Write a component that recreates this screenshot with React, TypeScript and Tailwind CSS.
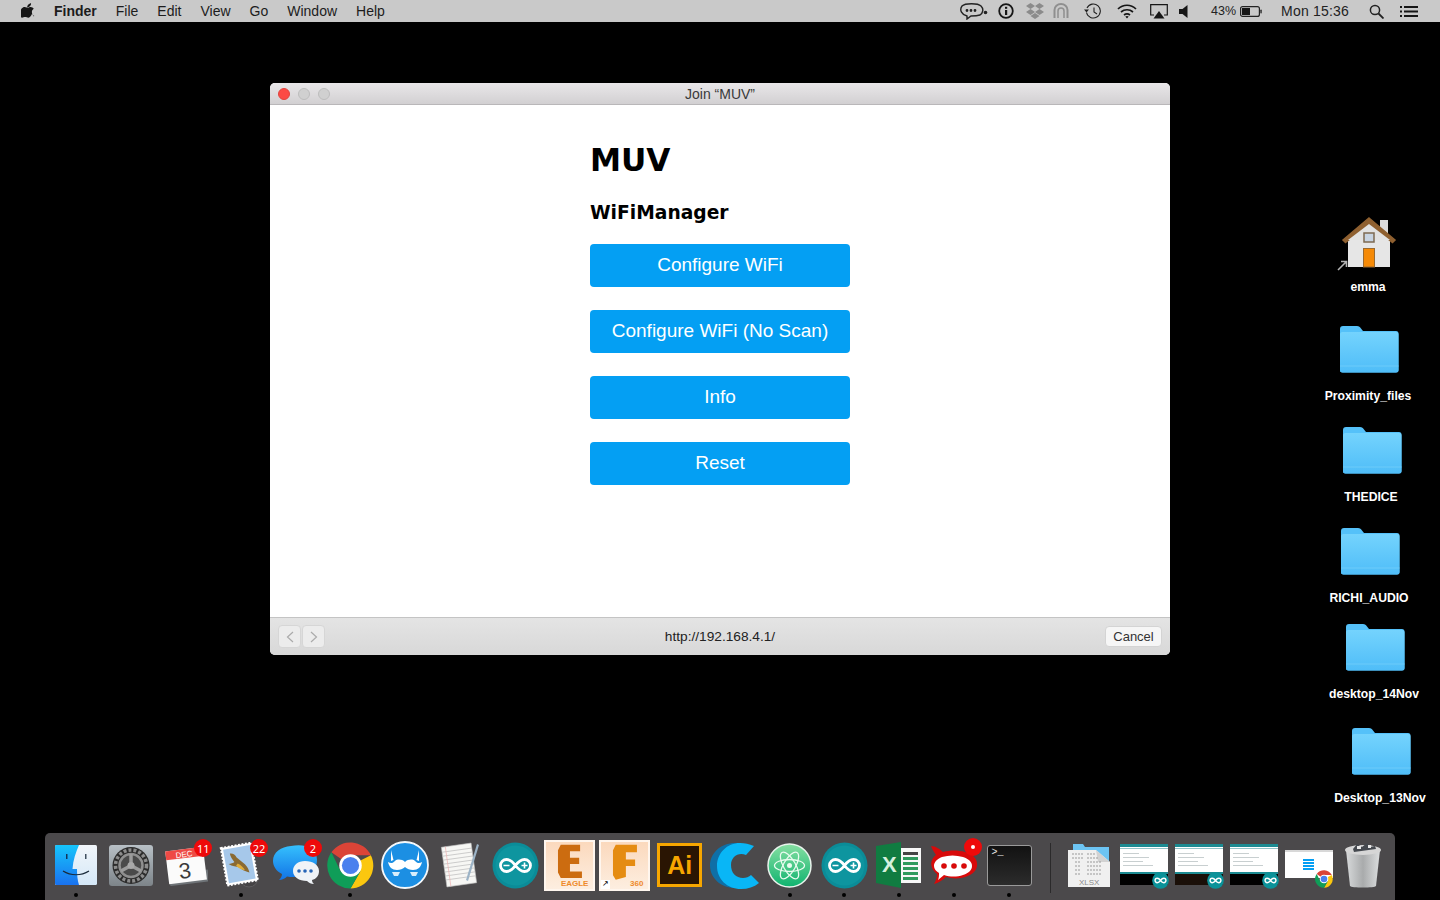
const sans = "font-['Liberation_Sans','Arial',sans-serif]";

const menus = ['File', 'Edit', 'View', 'Go', 'Window', 'Help'];

function MenuBar() {
  return (
    <div className={`flex h-[22px] items-center bg-[#c9c9c9] text-[14px] text-[#1c1c1c] ${sans}`}>
      <svg className="ml-[21px] h-[16px] w-[15px]" viewBox="0 0 170 200" fill="#161616">
        <path d="M150 155c-4 9-8 17-13 24-7 10-13 17-17 20-7 6-14 9-22 9-6 0-13-2-21-5-8-3-15-5-22-5-7 0-15 2-23 5-8 3-15 5-20 5-8 0-15-3-23-10C-15 170-22 120 6 85c11-14 25-21 41-21 9 0 20 3 31 7 7 2 11 3 13 3 2 0 7-1 15-4 8-3 16-4 24-4 20 2 34 9 44 23-18 11-26 26-26 45 0 15 6 27 16 37 5 4 10 8 16 10-1 4-3 8-5 12z" transform="translate(-6 -10) scale(.9 .93)" />
        <path d="M117 5c0 12-4 23-13 33-10 12-23 19-36 18-1-11 4-24 12-34 5-5 11-10 18-13 7-4 14-6 19-6z" />
      </svg>
      <span className="ml-[18px] font-bold">Finder</span>
      {menus.map((m) => (
        <span key={m} className="ml-[19px]">{m}</span>
      ))}
      <div className="flex-1" />
      <MenuExtras />
    </div>
  );
}

function MenuExtras() {
  return (
    <div className="flex items-center pr-[22px] text-[#222]">
      <svg className="h-[18px] w-[28px]" viewBox="0 0 28 18" fill="none" stroke="#222" strokeWidth="1.4">
        <path d="M2 4c3-3 16-3 19 0 3 3 2 7-1 9-3 1-7 1-9 1l-4 3 0-3c-5-1-8-6-5-10z" />
        <circle cx="7" cy="8.5" r=".7" fill="#222" /><circle cx="11" cy="8.5" r=".7" fill="#222" /><circle cx="15" cy="8.5" r=".7" fill="#222" />
        <circle cx="25.5" cy="10.5" r="1.8" fill="#222" stroke="none" />
      </svg>
      <svg className="ml-[10px] h-[16px] w-[16px]" viewBox="0 0 16 16" fill="none">
        <circle cx="8" cy="8" r="6.8" stroke="#161616" strokeWidth="1.8" />
        <rect x="7" y="3.8" width="2.2" height="2" fill="#161616" /><rect x="7" y="7" width="2.2" height="5" fill="#161616" />
      </svg>
      <svg className="ml-[12px] h-[16px] w-[18px]" viewBox="0 0 18 16" fill="#8b8b8b">
        <path d="M4.5 0 9 3 4.500 6 0 3zM13.500 0 18 3 13.500 6 9 3zM4.500 6 9 9 4.500 12 0 9zM13.500 6 18 9 13.500 12 9 9zM4.500 13l4.500-3 4.500 3-4.500 3z" />
      </svg>
      <svg className="ml-[9px] h-[16px] w-[16px]" viewBox="0 0 16 16" fill="none" stroke="#8f8f8f" strokeWidth="2">
        <path d="M1.500 15V7a6.500 6 0 0 1 13 0v8" /><path d="M5 15V8a3 3 0 0 1 6 0v7" strokeWidth="1.500" />
      </svg>
      <svg className="ml-[14px] h-[17px] w-[19px]" viewBox="0 0 19 17" fill="none" stroke="#222" strokeWidth="1.100">
        <path d="M4 5a7 7 0 1 1-.5 4.500" /><path d="M1 6.500h5L3.500 9.500z" fill="#222" stroke="none" /><path d="M11 4.500v4.500l3 2" />
      </svg>
      <svg className="ml-[15px] h-[15px] w-[20px]" viewBox="0 0 20 15" fill="none" stroke="#161616" strokeWidth="1.700">
        <path d="M1 5c5-5 13-5 18 0" /><path d="M4 8c3.500-3 8.500-3 12 0" /><path d="M7 11c2-1.500 4-1.500 6 0" />
        <path d="m8.300 12.500 1.700 2 1.700-2c-1-.7-2.400-.7-3.400 0z" fill="#161616" stroke="none" />
      </svg>
      <svg className="ml-[13px] h-[15px] w-[18px]" viewBox="0 0 18 15" fill="none">
        <path d="M4 11H.7V.7h16.600V11H14" stroke="#161616" strokeWidth="1.200" />
        <path d="m9 7 5.500 7.500h-11z" fill="#161616" />
      </svg>
      <svg className="ml-[11px] h-[13px] w-[9px]" viewBox="0 0 9 13" fill="#161616"><path d="M0 4h3.500L8.500 0v13L3.500 9H0z" /></svg>
      <span className="ml-[23px] text-[12.5px]">43%</span>
      <svg className="ml-[4px] h-[11px] w-[22px]" viewBox="0 0 22 11" fill="none">
        <rect x=".6" y=".6" width="18.800" height="9.800" rx="2" stroke="#222" strokeWidth="1.200" />
        <rect x="2" y="2" width="8" height="7" fill="#161616" />
        <rect x="20.300" y="3.500" width="1.500" height="4" rx=".7" fill="#333" />
      </svg>
      <span className="ml-[19px] tracking-[0.2px]">Mon 15:36</span>
      <svg className="ml-[20px] h-[15px] w-[15px]" viewBox="0 0 15 15" fill="none" stroke="#222" strokeWidth="1.500">
        <circle cx="6" cy="6" r="4.600" /><path d="m9.500 9.500 5 5" strokeWidth="1.800" />
      </svg>
      <svg className="ml-[16px] h-[11px] w-[18px]" viewBox="0 0 18 11" fill="#161616">
        <rect x="0" y="0" width="2" height="2" /><rect x="4" y="0" width="14" height="2" />
        <rect x="0" y="4.500" width="2" height="2" /><rect x="4" y="4.500" width="14" height="2" />
        <rect x="0" y="9" width="2" height="2" /><rect x="4" y="9" width="14" height="2" />
      </svg>
    </div>
  );
}

const actions = ['Configure WiFi', 'Configure WiFi (No Scan)', 'Info', 'Reset'];

function JoinWindow() {
  return (
    <div className={`absolute left-[270px] top-[83px] flex h-[572px] w-[900px] flex-col overflow-hidden rounded-[5px] bg-white ${sans}`}>
      <div className="relative flex h-[22px] items-center justify-center border-b border-[#b9b7b9] bg-gradient-to-b from-[#e9e7e9] to-[#d2d0d2] pt-[1px] text-[14px] text-[#3a3a3a]">
        <div className="absolute left-[8px] top-[5px] flex gap-[8px]">
          <span className="h-[12px] w-[12px] rounded-full border border-[#e0443e] bg-[#fc4a44]" />
          <span className="h-[12px] w-[12px] rounded-full border border-[#bcbcbc] bg-[#d0d0d0]" />
          <span className="h-[12px] w-[12px] rounded-full border border-[#bcbcbc] bg-[#d0d0d0]" />
        </div>
        Join “MUV”
      </div>
      <div className="flex flex-1 flex-col items-center">
        <div className="flex w-[260px] flex-col">
          <h1 className="mt-[36px] h-[38px] text-[31.2px] font-bold leading-[38px] text-black font-['DejaVu_Sans',sans-serif]">MUV</h1>
          <h2 className="mt-[21px] h-[25px] text-[18.7px] font-bold leading-[25px] text-black font-['DejaVu_Sans',sans-serif]">WiFiManager</h2>
          <div className="mt-[19px] flex flex-col gap-[23px]">
            {actions.map((a) => (
              <button key={a} className="flex h-[43px] items-center justify-center rounded-[4px] bg-[#049ff3] text-[19px] text-white">
                {a}
              </button>
            ))}
          </div>
        </div>
      </div>
      <div className="relative flex h-[38px] items-center justify-center border-t border-[#c4c4c4] bg-gradient-to-b from-[#e4e4e4] to-[#d8d8d8] pt-[2px] text-[13.7px] text-[#222]">
        <div className="absolute left-[8px] top-[7px] flex gap-[1px]">
          <span className="flex h-[23px] w-[23px] items-center justify-center rounded-[4px] border border-[#d6d6d6] bg-[#ececec]">
            <svg className="h-[12px] w-[8px]" viewBox="0 0 8 12" fill="none" stroke="#ababab" strokeWidth="1.200"><path d="M7 1 1.500 6 7 11" /></svg>
          </span>
          <span className="flex h-[23px] w-[23px] items-center justify-center rounded-[4px] border border-[#d6d6d6] bg-[#ececec]">
            <svg className="h-[12px] w-[8px]" viewBox="0 0 8 12" fill="none" stroke="#ababab" strokeWidth="1.200"><path d="M1 1l5.500 5L1 11" /></svg>
          </span>
        </div>
        http://192.168.4.1/
        <span className="absolute right-[8px] top-[8px] flex h-[21px] w-[57px] items-center justify-center rounded-[4px] border border-[#d4d4d4] bg-[#f6f6f6] text-[13px] text-[#333]">
          Cancel
        </span>
      </div>
    </div>
  );
}

function Folder() {
  return (
    <svg className="h-[48px] w-[60px]" viewBox="0 0 60 48">
      <defs>
        <linearGradient id="folderFill" x1="0" y1="0" x2="0" y2="1">
          <stop offset="0" stopColor="#74d3fd" />
          <stop offset="1" stopColor="#4fbdf8" />
        </linearGradient>
      </defs>
      <path d="M1 4a3 3 0 0 1 3-3h14c2 0 3 1 4 2.500L24 6h33a2.500 2.500 0 0 1 2.500 2.500V45a2.500 2.500 0 0 1-2.500 2.500H3.500A2.500 2.500 0 0 1 1 45z" fill="#55c1f9" />
      <path d="M1 9.500a2.500 2.500 0 0 1 2.500-2.500H57a2.500 2.500 0 0 1 2.500 2.500V45a2.500 2.500 0 0 1-2.500 2.500H3.500A2.500 2.500 0 0 1 1 45z" fill="url(#folderFill)" />
      <path d="M1 41h58.500" stroke="#6ccbfa" strokeWidth="1" />
    </svg>
  );
}

function HomeIcon() {
  return (
    <svg className="h-[56px] w-[62px]" viewBox="0 0 62 56">
      <rect x="43" y="4" width="8" height="16" fill="#dcdcdc" />
      <rect x="11" y="20" width="42" height="31" fill="#e6e6e6" />
      <path d="M32 2 58 24l-2.500 2.500L32 8 8.500 26.500 6 24z" fill="#8f6030" stroke="#8f6030" strokeWidth="1.500" />
      <path d="M32 8 53 24H11z" fill="#e2e2e2" />
      <rect x="27" y="17" width="10" height="9" fill="#c8d4e2" stroke="#7d6a52" strokeWidth="1.500" />
      <rect x="26.500" y="32.500" width="11" height="18.500" fill="#f58a07" stroke="#9a6a30" />
    </svg>
  );
}

const desktopItems = [
  { label: 'Proximity_files', left: 'left-[1339px]', top: 'top-[325px]', labelTop: 'top-[387px]', labelLeft: 'left-[1317px]' },
  { label: 'THEDICE', left: 'left-[1342px]', top: 'top-[426px]', labelTop: 'top-[488px]', labelLeft: 'left-[1320px]' },
  { label: 'RICHI_AUDIO', left: 'left-[1340px]', top: 'top-[527px]', labelTop: 'top-[589px]', labelLeft: 'left-[1318px]' },
  { label: 'desktop_14Nov', left: 'left-[1345px]', top: 'top-[623px]', labelTop: 'top-[685px]', labelLeft: 'left-[1323px]' },
  { label: 'Desktop_13Nov', left: 'left-[1351px]', top: 'top-[727px]', labelTop: 'top-[789px]', labelLeft: 'left-[1329px]' },
];

function DesktopIcons() {
  return (
    <div className={`text-[12.2px] font-bold text-white ${sans}`}>
      <div className="absolute left-[1337px] top-[216px]"><HomeIcon /></div>
      <svg className="absolute left-[1337px] top-[260px] h-[11px] w-[11px]" viewBox="0 0 11 11" fill="none" stroke="#b4b4b4" strokeWidth="1.600">
        <path d="M1 10 9 2M4 1.500h5.500V7" />
      </svg>
      <div className="absolute left-[1318px] top-[278px] w-[100px] text-center">emma</div>
      {desktopItems.map((d) => (
        <div key={d.label}>
          <div className={`absolute ${d.left} ${d.top}`}><Folder /></div>
          <div className={`absolute ${d.labelLeft} ${d.labelTop} w-[102px] text-center`}>{d.label}</div>
        </div>
      ))}
    </div>
  );
}

function Badge({ text, className }: { text: string; className: string }) {
  return (
    <span className={`absolute flex h-[18px] w-[18px] items-center justify-center rounded-full bg-[#ee0a0a] text-[11px] leading-none text-white ${className}`}>
      {text}
    </span>
  );
}

function Finder() {
  return (
    <svg className="h-[40px] w-[42px]" viewBox="0 0 42 40">
      <defs>
        <linearGradient id="finderL" x1="0" y1="0" x2="0" y2="1"><stop offset="0" stopColor="#16c5fb" /><stop offset="1" stopColor="#1a72ef" /></linearGradient>
        <linearGradient id="finderR" x1="0" y1="0" x2="0" y2="1"><stop offset="0" stopColor="#f1f6fa" /><stop offset="1" stopColor="#d5e8f8" /></linearGradient>
      </defs>
      <rect width="42" height="40" rx="1.500" fill="url(#finderR)" />
      <path d="M1.500 0H24c-3 7-6 15-6.500 24H22c0 6 .5 11 2 16H1.500A1.500 1.500 0 0 1 0 38.500v-37A1.500 1.500 0 0 1 1.500 0z" fill="url(#finderL)" />
      <path d="M8 26c8 5 18 5 26 0" fill="none" stroke="#1a2a3a" strokeWidth="1.200" />
      <rect x="11" y="9" width="1.500" height="5" fill="#12365a" /><rect x="30" y="9" width="1.500" height="5" fill="#40505f" />
    </svg>
  );
}

function Prefs() {
  return (
    <svg className="h-[41px] w-[44px]" viewBox="0 0 44 41">
      <defs><linearGradient id="prefsBg" x1="0" y1="0" x2="0" y2="1"><stop offset="0" stopColor="#b8c0c6" /><stop offset="1" stopColor="#7d8489" /></linearGradient></defs>
      <rect width="44" height="41" rx="3" fill="url(#prefsBg)" />
      <circle cx="22" cy="20.500" r="18.500" fill="#2c2c2c" />
      <circle cx="22" cy="20.500" r="15.500" fill="none" stroke="#8c8c8c" strokeWidth="3.500" strokeDasharray="3 2" />
      <circle cx="22" cy="20.500" r="11.500" fill="#4a4a4a" stroke="#8f8f8f" strokeWidth="2.500" />
      <path d="M22 20.500V9M22 20.500 12 26M22 20.500 32 26" stroke="#9b9b9b" strokeWidth="3.500" />
      <circle cx="22" cy="20.500" r="3.500" fill="#a8a8a8" />
    </svg>
  );
}

function Calendar() {
  return (
    <svg className="h-[42px] w-[44px]" viewBox="0 0 44 42">
      <g transform="rotate(-7 22 21)">
        <rect x="4" y="28" width="39" height="12" fill="#6f7478" />
        <rect x="3" y="5" width="38" height="33" fill="#fbfbfb" />
        <rect x="3" y="5" width="38" height="9" fill="#ee4a45" />
        <text x="13" y="13" fontSize="8" fill="#fff" fontFamily="Liberation Sans">DEC</text>
        <text x="14" y="34" fontSize="22" fill="#3a3a3a" fontFamily="Liberation Sans">3</text>
      </g>
    </svg>
  );
}

function Mail() {
  return (
    <svg className="h-[46px] w-[44px]" viewBox="0 0 44 46">
      <circle cx="30" cy="36" r="9" fill="#454345" stroke="#5e5c5e" />
      <g transform="rotate(-10 21 23)">
        <rect x="5" y="3" width="31" height="38" fill="#fff" stroke="#fff" strokeWidth="2" strokeDasharray="2 1.500" />
        <rect x="7" y="5" width="27" height="34" fill="#a6c8ea" />
        <path d="M13 10c3 0 5 2 6 5l7 8c2 3 3 6 3 9-4-2-7-4-9-7-3-1-7-2-10-5 2 0 5 0 6-1-2-3-3-6-3-9z" fill="#8a6a32" />
        <path d="M19 21c3 2 5 5 6 8-3-1-6-3-8-6z" fill="#e0ad3a" />
      </g>
    </svg>
  );
}

function Messages() {
  return (
    <svg className="h-[42px] w-[46px]" viewBox="0 0 46 42">
      <defs><linearGradient id="msgBlue" x1="0" y1="0" x2="0" y2="1"><stop offset="0" stopColor="#35c0fd" /><stop offset="1" stopColor="#1273e6" /></linearGradient></defs>
      <path d="M18 2C30 0 44 2 44 16c0 11-10 17-24 17-2 0-4 0-6-.5-2 2-5 3.500-8 3.500 2-2 3-4 3-6C3 27 0 22 0 17 0 8 8 3 18 2z" fill="url(#msgBlue)" />
      <path d="M32 17c8 0 14 4 14 10 0 5-3 8-7 9 0 2 1 3 2 4-3 0-5-1-7-3-8 0-14-4-14-10s5-10 12-10z" fill="#eff3f7" />
      <circle cx="26" cy="27" r="1.800" fill="#2765b7" /><circle cx="32" cy="27" r="1.800" fill="#2765b7" /><circle cx="38" cy="27" r="1.800" fill="#2765b7" />
    </svg>
  );
}

function Chrome({ size = 'h-[47px] w-[47px]' }: { size?: string }) {
  return (
    <svg className={size} viewBox="0 0 48 48">
      <path d="M24 24 4.500 10.500A23.500 23.500 0 0 1 44.800 13.500H24z" fill="#db4437" />
      <path d="M24 24 44.800 13.500A23.500 23.500 0 0 1 24 47.500L34 30z" fill="#fbc70f" />
      <path d="M24 24 34 30 24 47.500A23.500 23.500 0 0 1 4.500 10.500L14 30z" fill="#0f9d58" />
      <circle cx="24" cy="24" r="11.500" fill="#fff" />
      <circle cx="24" cy="24" r="8.800" fill="#4a80ee" />
    </svg>
  );
}

function Moustache() {
  return (
    <svg className="h-[48px] w-[48px]" viewBox="0 0 48 48">
      <circle cx="24" cy="24" r="23" fill="#1c8fe3" stroke="#f4f8fb" strokeWidth="1.800" />
      <path d="M24 21c3-3 8-3 10-1 2 2 4 3 7 1-1 5-4 8-9 8-3 0-6-1-8-3-2 2-5 3-8 3-5 0-8-3-9-8 3 2 5 1 7-1 2-2 7-2 10 1z" fill="#fff" />
      <path d="M10 20V9l2.500 10zM38 20V9l-2.500 10z" fill="#fff" />
      <path d="M11 31h8l-2 4h-4zM29 31h8l-2 4h-4z" fill="#d9eefb" />
    </svg>
  );
}

function Notepad() {
  return (
    <svg className="h-[46px] w-[42px]" viewBox="0 0 42 46">
      <g transform="rotate(-8 20 23)">
        <rect x="5" y="3" width="30" height="40" fill="#f7f7f4" stroke="#bdbdbd" strokeWidth=".6" />
        <path d="M5 8h30M5 12h30M5 16h30M5 20h30M5 24h30M5 28h30M5 32h30M5 36h30" stroke="#bdbdbd" strokeWidth=".7" />
        <path d="M9 3v40" stroke="#eeb4b4" strokeWidth=".7" />
      </g>
      <path d="M38 2 40 3 29 39l-2-1z" fill="#9cb3c6" />
    </svg>
  );
}

function Arduino() {
  return (
    <svg className="h-[47px] w-[47px]" viewBox="0 0 47 47">
      <circle cx="23.500" cy="23.500" r="23" fill="#0b8c98" />
      <circle cx="23.500" cy="23.500" r="20" fill="#0e959f" />
      <path d="M23.500 23.500c-3-4-5.500-6-9-6a6 6 0 0 0 0 12c3.500 0 6-2 9-6 3-4 5.500-6 9-6a6 6 0 0 1 0 12c-3.500 0-6-2-9-6z" fill="none" stroke="#fff" strokeWidth="2.800" />
      <path d="M11.500 23.500h6M29.500 23.500h6M32.500 20.500v6" stroke="#fff" strokeWidth="1.600" />
    </svg>
  );
}

function Autodesk({ letter, label, shortcut }: { letter: 'E' | 'F'; label: string; shortcut?: boolean }) {
  const mark = letter === 'E'
    ? 'M15 4h21v7H25v7h10v7H25v8h13v7H15l-3-6V10z'
    : 'M15 4h23v8H26v8h10v7H26v12l-11 3-3-5V10z';
  const fill = letter === 'E' ? '#cc6c10' : '#e58c12';
  return (
    <div className={`relative flex h-[51px] w-[51px] flex-col border-2 border-[#fff6ee] bg-gradient-to-b from-[#fbd9bd] to-[#fdeee0] ${sans}`}>
      <svg className="h-[47px] w-[47px]" viewBox="0 0 51 51">
        <path d={mark} fill={fill} transform="translate(1 -1)" />
      </svg>
      <span className="absolute bottom-[1px] right-[5px] text-[8px] font-bold leading-none text-[#ee8a2b]">{label}</span>
      {shortcut && (
        <span className="absolute bottom-0 left-0 flex h-[9px] w-[9px] items-center justify-center bg-white text-[8px] leading-none text-black">↗</span>
      )}
    </div>
  );
}

function Illustrator() {
  return (
    <div className={`flex h-[44px] w-[45px] items-center justify-center border-[3px] border-[#f7a600] bg-[#2a1503] text-[25px] font-bold leading-none text-[#f7a600] ${sans}`}>
      Ai
    </div>
  );
}

function Crescent() {
  return (
    <svg className="h-[47px] w-[49px]" viewBox="0 0 49 47">
      <path d="M25 1C11 1 0 11 0 23.500S11 46 25 46c4 0 7-1 9-3-9-1-15-9-15-19 0-10 7-19 17-21-3-1-7-2-11-2z" fill="#0f6fa6" />
      <path d="M30 1c5 0 9 1 14 3l-8 9c-8-3-15 2-15 10s5 13 12 13c3 0 6-1 8-3l8 8c-5 4-11 6-18 6C17 47 7 37 7 24S17 1 30 1z" fill="#09b6f6" />
    </svg>
  );
}

function Atom() {
  return (
    <svg className="h-[45px] w-[45px]" viewBox="0 0 45 45">
      <defs><linearGradient id="atomBg" x1="0" y1="0" x2="0" y2="1"><stop offset="0" stopColor="#86dfa2" /><stop offset="1" stopColor="#0fb36f" /></linearGradient></defs>
      <circle cx="22.500" cy="22.500" r="21.500" fill="url(#atomBg)" stroke="#e8f3ec" strokeWidth="1.500" />
      <g fill="none" stroke="#e9fbef" strokeWidth="1.300">
        <ellipse cx="22.500" cy="22.500" rx="15" ry="6" />
        <ellipse cx="22.500" cy="22.500" rx="15" ry="6" transform="rotate(60 22.500 22.500)" />
        <ellipse cx="22.500" cy="22.500" rx="15" ry="6" transform="rotate(120 22.500 22.500)" />
      </g>
      <circle cx="22.500" cy="22.500" r="2.500" fill="#e9fbef" />
    </svg>
  );
}

function Excel() {
  return (
    <svg className="h-[46px] w-[46px]" viewBox="0 0 46 46">
      <rect x="24" y="6" width="21" height="35" fill="#f7f7f7" />
      <path d="M27 10h15v3H27zM27 15h15v3H27zM27 20h15v3H27zM27 25h15v3H27zM27 30h15v3H27zM27 35h15v3H27z" fill="#2f9a5d" />
      <path d="M27 10h15v3H27z" fill="#444" />
      <path d="M0 4 25 0v46L0 41z" fill="#107c41" />
      <text x="6" y="30" fontSize="22" fontWeight="bold" fill="#d5f0dd" fontFamily="Liberation Sans">X</text>
    </svg>
  );
}

function Rocket() {
  return (
    <svg className="h-[44px] w-[50px]" viewBox="0 0 50 44">
      <path d="M2 3c4 0 9 3 12 6 7-2 15-2 22 0 4 1 8 3 10 6 3 4 3 10-1 14-6 6-18 8-28 5-3 3-8 6-12 7 2-3 3-7 3-10C3 27 1 22 3 17c1-2 2-4 4-5C5 9 3 6 2 3z" fill="#d80a0a" />
      <path d="M13 14c7-2 14-2 21 0 6 2 9 5 9 9s-3 7-9 9c-6 2-13 2-19 0l-6 5c1-2 1-5 1-7-3-2-5-4-5-7 0-4 3-7 8-9z" fill="#fff" />
      <circle cx="15" cy="23" r="2.800" fill="#d80a0a" /><circle cx="25" cy="23" r="2.800" fill="#d80a0a" /><circle cx="35" cy="23" r="2.800" fill="#d80a0a" />
    </svg>
  );
}

function Terminal() {
  return (
    <div className="h-[41px] w-[45px] rounded-[3px] border border-[#9a9a9a] bg-gradient-to-b from-[#121212] to-[#2c2c2c] px-[4px] py-[1px] font-['Liberation_Mono',monospace] text-[10px] leading-[12px] text-[#e6e6e6]">
      &gt;_
    </div>
  );
}

function XlsxStack() {
  return (
    <svg className="h-[46px] w-[44px]" viewBox="0 0 44 46">
      <path d="M6 2h10l2 3h24v38H6z" fill="#6cc4f3" />
      <path d="M1 8h28l14 12v25H1z" fill="#f0f0f0" />
      <path d="M29 8l14 12H31z" fill="#d2d2d2" />
      <path d="M5 12h12M20 12h8M5 16h12M20 16h12M8 20h5M20 20h14M8 24h5M20 24h14M8 28h5M20 28h14M8 32h5M20 32h14" stroke="#9a9a9a" strokeWidth="1" strokeDasharray="2 1" />
      <text x="12" y="43" fontSize="8" fill="#8a8a8a" fontFamily="Liberation Sans">XLSX</text>
    </svg>
  );
}

function SketchThumb({ lower }: { lower: string }) {
  return (
    <div className="relative h-[42px] w-[48px]">
      <div className="flex h-[41px] w-[48px] flex-col bg-white">
        <div className="h-[3px] bg-[#1c8b92]" />
        <div className="mt-[1px] h-[1px] bg-[#8fc3c8]" />
        <div className="flex-1 px-[3px] pt-[4px]">
          <div className="h-[1px] w-[16px] bg-[#c8cfd0]" />
          <div className="mt-[3px] h-[1px] w-[26px] bg-[#c8cfd0]" />
          <div className="mt-[3px] h-[1px] w-[20px] bg-[#c8cfd0]" />
          <div className="mt-[3px] h-[1px] w-[30px] bg-[#c8cfd0]" />
        </div>
        <div className="h-[2px] bg-[#1c8b92]" />
        <div className={`h-[11px] ${lower}`} />
      </div>
      <svg className="absolute bottom-[-3px] right-[-1px] h-[17px] w-[17px]" viewBox="0 0 47 47">
        <circle cx="23.500" cy="23.500" r="23" fill="#0b9299" />
        <path d="M23.500 23.500c-3-4-5.500-6-9-6a6 6 0 0 0 0 12c3.500 0 6-2 9-6 3-4 5.500-6 9-6a6 6 0 0 1 0 12c-3.500 0-6-2-9-6z" fill="none" stroke="#fff" strokeWidth="4" />
      </svg>
    </div>
  );
}

function ChromeThumb() {
  return (
    <div className="relative mt-[-2px] h-[28px] w-[48px] bg-white">
      <div className="h-[2px] bg-[#d8d8d8]" />
      <div className="mx-auto mt-[7px] flex w-[11px] flex-col gap-[1px]">
        <div className="h-[2px] bg-[#049ff3]" /><div className="h-[2px] bg-[#049ff3]" /><div className="h-[2px] bg-[#049ff3]" /><div className="h-[2px] bg-[#049ff3]" />
      </div>
      <div className="absolute bottom-[-10px] right-[0px]"><Chrome size="h-[18px] w-[18px]" /></div>
    </div>
  );
}

function Trash() {
  return (
    <svg className="h-[48px] w-[38px]" viewBox="0 0 38 48">
      <defs><linearGradient id="trashBg" x1="0" y1="0" x2="1" y2="0"><stop offset="0" stopColor="#d8dadb" /><stop offset=".5" stopColor="#a9abac" /><stop offset="1" stopColor="#dcdedf" /></linearGradient></defs>
      <path d="M2 9h34l-4 36c-1 2-25 2-26 0z" fill="url(#trashBg)" />
      <ellipse cx="19" cy="9" rx="18" ry="5" fill="#d6d6d6" />
      <path d="M9 8l4-5 5 3 5-4 3 4 5-1 1 3-22 3z" fill="#45494f" />
      <path d="M13 5h4v3h-4zM24 4h3v3h-3z" fill="#e8e8e8" />
    </svg>
  );
}

const dockApps = [
  { id: 'finder', icon: <Finder />, running: true },
  { id: 'prefs', icon: <Prefs /> },
  { id: 'calendar', icon: <Calendar />, badge: <Badge text="11" className="right-[1px] top-[6px]" /> },
  { id: 'mail', icon: <Mail />, running: true, badge: <Badge text="22" className="right-[0px] top-[6px]" /> },
  { id: 'messages', icon: <Messages />, badge: <Badge text="2" className="right-[1px] top-[6px]" /> },
  { id: 'chrome', icon: <Chrome />, running: true },
  { id: 'moustache', icon: <Moustache /> },
  { id: 'notes', icon: <Notepad /> },
  { id: 'arduino', icon: <Arduino /> },
  { id: 'eagle', icon: <Autodesk letter="E" label="EAGLE" /> },
  { id: 'fusion', icon: <Autodesk letter="F" label="360" shortcut /> },
  { id: 'ai', icon: <Illustrator /> },
  { id: 'crescent', icon: <Crescent /> },
  { id: 'atom', icon: <Atom />, running: true },
  { id: 'arduino2', icon: <Arduino />, running: true },
  { id: 'excel', icon: <Excel />, running: true },
  { id: 'rocket', icon: <Rocket />, running: true, badge: <span className="absolute right-[0px] top-[5px] flex h-[18px] w-[18px] items-center justify-center rounded-full bg-[#ee0a0a]"><span className="h-[4px] w-[4px] rounded-full bg-white" /></span> },
  { id: 'terminal', icon: <Terminal />, running: true },
];

const dockDocs = [
  { id: 'xlsx', icon: <XlsxStack /> },
  { id: 'sketch1', icon: <SketchThumb lower="bg-black" /> },
  { id: 'sketch2', icon: <SketchThumb lower="bg-[#1a0f08]" /> },
  { id: 'sketch3', icon: <SketchThumb lower="bg-black" /> },
  { id: 'chromeWin', icon: <ChromeThumb /> },
  { id: 'trash', icon: <Trash /> },
];

function Dock() {
  return (
    <div className="absolute bottom-0 left-[45px] flex h-[67px] w-[1350px] items-start rounded-t-[5px] bg-[#4b494b] pl-[3.500px]">
      {dockApps.map((app) => (
        <div key={app.id} className="relative flex h-[67px] w-[54.900px] shrink-0 items-center justify-center pb-[3px]">
          {app.icon}
          {app.badge}
          {app.running && <span className="absolute bottom-[3px] left-1/2 h-[4px] w-[4px] -translate-x-1/2 rounded-full bg-black" />}
        </div>
      ))}
      <div className="ml-[13.500px] mr-[11px] mt-[10px] h-[50px] w-[1px] bg-[#2b2a2b]" />
      {dockDocs.map((doc) => (
        <div key={doc.id} className="relative flex h-[67px] w-[54.800px] shrink-0 items-center justify-center pb-[3px]">
          {doc.icon}
        </div>
      ))}
    </div>
  );
}

export default function App() {
  return (
    <div className="relative h-[900px] w-[1440px] overflow-hidden bg-black">
      <MenuBar />
      <JoinWindow />
      <DesktopIcons />
      <Dock />
    </div>
  );
}
